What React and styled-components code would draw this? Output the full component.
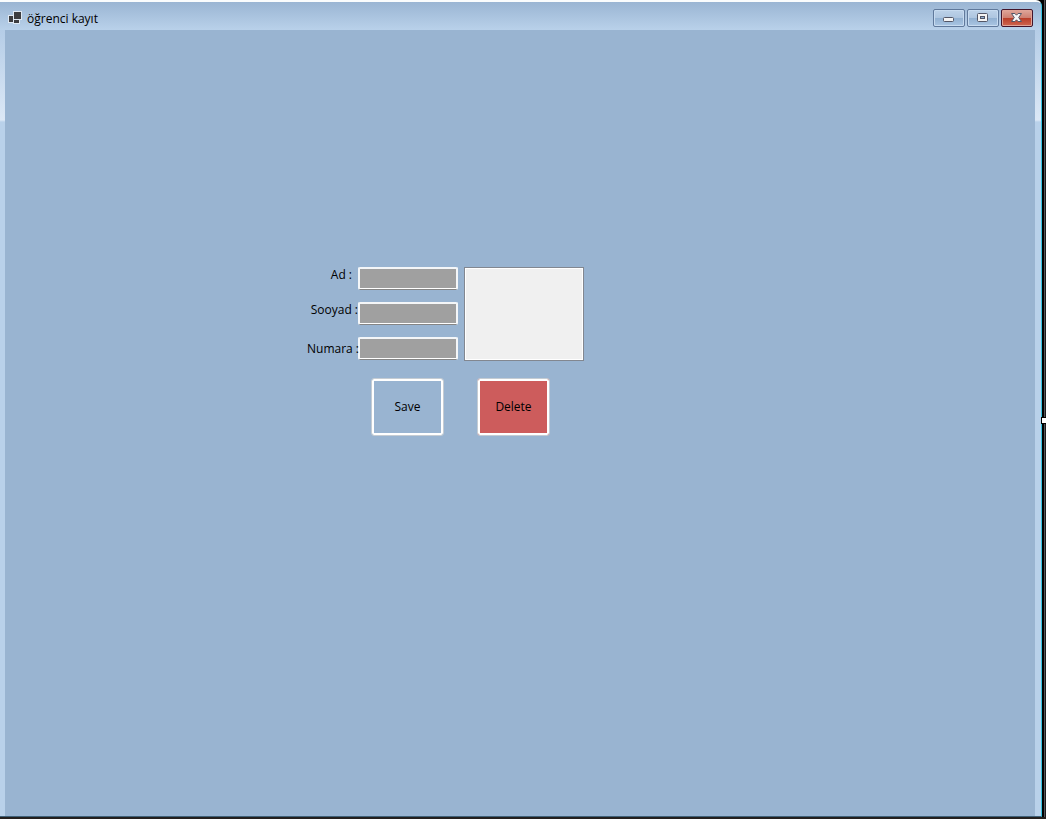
import React from "react";
import styled, { createGlobalStyle } from "styled-components";

const GlobalStyle = createGlobalStyle`
  * { box-sizing: border-box; }
  body {
    margin: 0;
    background: #1c1c1f;
    font-family: "Open Sans", "Noto Sans", sans-serif;
    font-size: 12px;
    line-height: 16px;
    color: #000;
  }
`;

const Desktop = styled.div`
  position: relative;
  display: flex;
  min-height: 100vh;
  padding: 0 4px 2px 0;
  background:
    linear-gradient(#231f1d, #231f1d) bottom / 100% 2px no-repeat,
    linear-gradient(to left, #1c1c1f 1px, #555558 1px, #555558 2px, #000 2px, #000 100%);
`;

const Window = styled.main`
  flex: 1;
  display: flex;
  flex-direction: column;
  border-top: 2px solid #fafcfd;
  border-right: 1px solid #35c3e2;
  border-bottom: 1px solid #3f6078;
  border-radius: 0 6px 0 0;
  background: #b9d1ea;
`;

const TitleBar = styled.header`
  display: flex;
  align-items: center;
  height: 28px;
  padding: 4px 8px 0 8px;
  background: linear-gradient(#9ab5d3, #b9d1ea);
  border-radius: 0 4px 0 0;
`;

const Title = styled.h1`
  flex: 1;
  margin: 0;
  padding: 2px 0 0 4px;
  font-size: 12px;
  font-weight: 400;
`;

const WindowControls = styled.div`
  display: flex;
  gap: 2px;
`;

const ControlButton = styled.button`
  display: flex;
  align-items: center;
  justify-content: center;
  width: 32px;
  height: 18px;
  padding: 0;
  border: 1px solid ${({ $danger }) => ($danger ? "#43142a" : "#60799b")};
  border-radius: 2px;
  background: ${({ $danger }) =>
    $danger
      ? "linear-gradient(#dfa79b, #ce8072 48%, #b83c28 50%, #cf6650)"
      : "linear-gradient(#bdd2e9, #aec6e0 48%, #91b0d1 50%, #aac6e3)"};
  box-shadow: inset 0 0 0 1px ${({ $danger }) => ($danger ? "#e0a498" : "#c7dbf0")};
`;

const Frame = styled.div`
  flex: 1;
  display: flex;
  padding: 0 6px 0 5px;
  background: linear-gradient(#b5cde7, #dce8f6 90px, #b9d1ea 92px);
`;

const Client = styled.section`
  flex: 1;
  padding: 237px 0 0 302px;
  background: #99b4d1;
`;

const Form = styled.form`
  display: flex;
  flex-direction: column;
  gap: 17px;
`;

const Entry = styled.div`
  display: flex;
  gap: 6px;
`;

const Fields = styled.div`
  display: flex;
  flex-direction: column;
  gap: 12px;
`;

const Field = styled.div`
  display: flex;
  align-items: ${({ $middle }) => ($middle ? "center" : "flex-start")};
`;

const Label = styled.label`
  position: relative;
  z-index: 1;
  width: 51px;
  padding-right: ${({ $inset }) => ($inset ? "6px" : "0")};
  text-align: right;
  white-space: nowrap;
`;

const TextBox = styled.input`
  width: 100px;
  height: 23px;
  padding: 0 4px;
  border: 2px solid #f4f6f8;
  border-bottom: 1px solid #858585;
  border-radius: 2px;
  background: #a0a0a0;
  box-shadow: inset 0 -1px 0 #fff;
  font: inherit;
  outline: none;
`;

const Records = styled.textarea`
  display: block;
  width: 120px;
  height: 94px;
  padding: 4px;
  border: 1px solid #828790;
  background: #f0f0f0;
  box-shadow: inset 0 0 0 1px #fff;
  font: inherit;
  resize: none;
  outline: none;
`;

const Actions = styled.div`
  display: flex;
  gap: 33px;
  padding-left: 64px;
`;

const ActionButton = styled.button`
  width: 73px;
  height: 58px;
  padding: 0;
  border: 1px solid #c5ccd3;
  border-radius: 3px;
  background: ${({ $fill }) => $fill};
  box-shadow: inset 0 0 0 2px #fff;
  font: inherit;
  color: #000;
`;

const ResizeGrip = styled.span`
  position: absolute;
  top: 418px;
  right: 0;
  width: 4px;
  height: 5px;
  background: #fff;
  box-shadow: 0 0 0 1px #000;
`;

const AppIcon = () => (
  <svg width="15" height="14" viewBox="0 0 15 14" shapeRendering="crispEdges" aria-hidden="true">
    <path d="M5 0h9v9h-2v4H5v-1H0V4h5z" fill="#dfe8f2" />
    <path d="M6 1h7v7H6zM1 5h4v6H1zM6 9h5v3H6z" fill="#3c3c3f" />
  </svg>
);

const MinimizeIcon = () => (
  <svg width="12" height="12" viewBox="0 0 12 12" aria-hidden="true">
    <rect x="0.5" y="5.5" width="10" height="4" rx="1" fill="#f4f4f4" stroke="#535666" />
  </svg>
);

const MaximizeIcon = () => (
  <svg width="12" height="12" viewBox="0 0 12 12" aria-hidden="true">
    <rect x="0.5" y="1.5" width="10" height="8" rx="1" fill="#f4f4f4" stroke="#535666" />
    <rect x="3.5" y="4.5" width="4" height="2" fill="#91b0d1" stroke="#535666" />
  </svg>
);

const CloseIcon = () => (
  <svg width="12" height="12" viewBox="0 0 12 12" aria-hidden="true">
    <path
      d="M0.5 1.5h3.4L5.5 3.2l1.6-1.7h3.4L7.7 5.5l2.8 4H7.1L5.5 7.8 3.9 9.5H.5l2.8-4z"
      fill="#f7f7f7"
      stroke="#535666"
      strokeLinejoin="round"
    />
  </svg>
);

const fields = [
  { id: "ad", label: "Ad :", inset: true },
  { id: "sooyad", label: "Sooyad :" },
  { id: "numara", label: "Numara :", middle: true },
];

export default function App() {
  return (
    <Desktop>
      <GlobalStyle />
      <Window>
        <TitleBar>
          <AppIcon />
          <Title>öğrenci kayıt</Title>
          <WindowControls>
            <ControlButton type="button" aria-label="Minimize"><MinimizeIcon /></ControlButton>
            <ControlButton type="button" aria-label="Maximize"><MaximizeIcon /></ControlButton>
            <ControlButton type="button" aria-label="Close" $danger><CloseIcon /></ControlButton>
          </WindowControls>
        </TitleBar>
        <Frame>
          <Client>
            <Form onSubmit={(event) => event.preventDefault()}>
              <Entry>
                <Fields>
                  {fields.map(({ id, label, inset, middle }) => (
                    <Field key={id} $middle={middle}>
                      <Label htmlFor={id} $inset={inset}>{label}</Label>
                      <TextBox id={id} type="text" />
                    </Field>
                  ))}
                </Fields>
                <Records aria-label="Records" readOnly />
              </Entry>
              <Actions>
                <ActionButton type="submit" $fill="#99b4d1">Save</ActionButton>
                <ActionButton type="button" $fill="#cd5c5c">Delete</ActionButton>
              </Actions>
            </Form>
          </Client>
        </Frame>
      </Window>
      <ResizeGrip />
    </Desktop>
  );
}
